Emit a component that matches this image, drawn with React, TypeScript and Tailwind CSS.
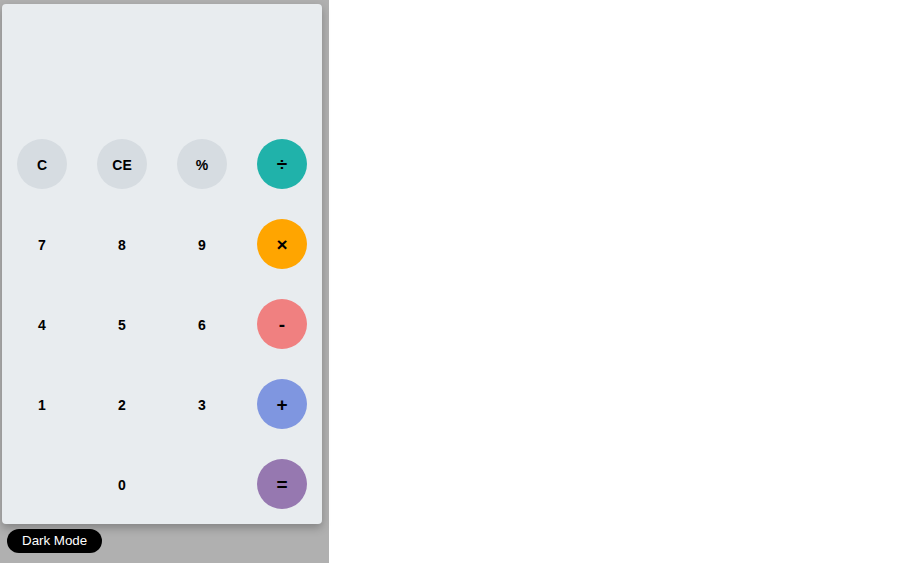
import React from "react";

type B = { label: string; cls: string; op?: boolean };

const rows: B[][] = [
  [
    { label: "C", cls: "bg-[#d6dce1]" },
    { label: "CE", cls: "bg-[#d6dce1]" },
    { label: "%", cls: "bg-[#d6dce1]" },
    { label: "÷", cls: "bg-[#20b2aa]", op: true },
  ],
  [
    { label: "7", cls: "" },
    { label: "8", cls: "" },
    { label: "9", cls: "" },
    { label: "×", cls: "bg-[#ffa500]", op: true },
  ],
  [
    { label: "4", cls: "" },
    { label: "5", cls: "" },
    { label: "6", cls: "" },
    { label: "-", cls: "bg-[#f08080]", op: true },
  ],
  [
    { label: "1", cls: "" },
    { label: "2", cls: "" },
    { label: "3", cls: "" },
    { label: "+", cls: "bg-[#7f96e0]", op: true },
  ],
  [
    { label: "", cls: "" },
    { label: "0", cls: "" },
    { label: "", cls: "" },
    { label: "=", cls: "bg-[#9678b0]", op: true },
  ],
];

export default function App() {
  return (
    <div
      className="w-[329px] h-[563px] bg-[#b0b0b0] pl-[2px] pt-[4px]"
      style={{ fontFamily: '"Liberation Sans", Arial, sans-serif' }}
    >
      <div className="w-[320px] h-[520px] bg-[#e8ecef] rounded-[4px] shadow-[0_4px_8px_rgba(0,0,0,0.25)] flex flex-col">
        <div className="h-[120px]" />
        <div className="grid grid-cols-4">
          {rows.flat().map((b, i) => (
            <div key={i} className="h-[80px] flex items-center justify-center">
              {b.label !== "" && (
                <div
                  className={`w-[50px] h-[50px] rounded-full flex items-center justify-center font-bold text-black ${b.cls} ${
                    b.op ? "text-[19px] leading-none" : "text-[14px] pt-[2px]"
                  }`}
                >
                  {b.label}
                </div>
              )}
            </div>
          ))}
        </div>
      </div>
      <button className="mt-[5px] ml-[5px] h-[24px] px-[15px] rounded-full bg-black text-white text-[13.33px] leading-[24px]">
        Dark Mode
      </button>
    </div>
  );
}
